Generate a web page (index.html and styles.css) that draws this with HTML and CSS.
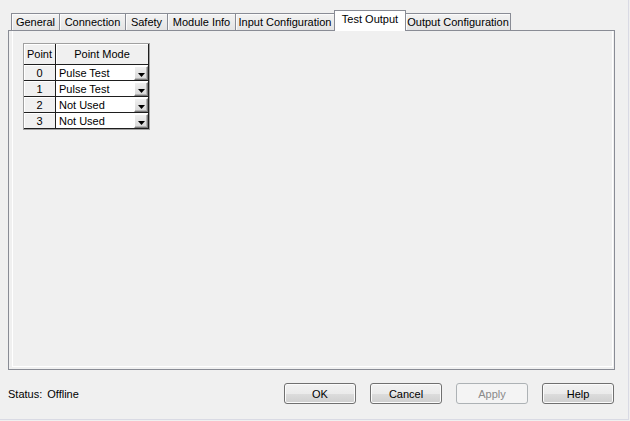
FILE: index.html
```html
<!DOCTYPE html>
<html>
<head>
<meta charset="utf-8">
<link rel="stylesheet" href="styles.css">
</head>
<body>
<div class="window">
  <div class="tabs">
    <div class="tab t-general">General</div>
    <div class="tab t-connection">Connection</div>
    <div class="tab t-safety">Safety</div>
    <div class="tab t-module">Module Info</div>
    <div class="tab t-input">Input Configuration</div>
    <div class="tab active t-test">Test Output</div>
    <div class="tab t-output">Output Configuration</div>
  </div>
  <div class="panel">
    <div class="page">
      <div class="grid">
        <div class="hd">Point</div>
        <div class="hd">Point Mode</div>
        <div class="num">0</div>
        <div class="mode"><span>Pulse Test</span><span class="drop"><svg width="7" height="4" viewBox="0 0 7 4"><polygon points="0,0 7,0 3.5,4" fill="#000"/></svg></span></div>
        <div class="num">1</div>
        <div class="mode"><span>Pulse Test</span><span class="drop"><svg width="7" height="4" viewBox="0 0 7 4"><polygon points="0,0 7,0 3.5,4" fill="#000"/></svg></span></div>
        <div class="num">2</div>
        <div class="mode"><span>Not Used</span><span class="drop"><svg width="7" height="4" viewBox="0 0 7 4"><polygon points="0,0 7,0 3.5,4" fill="#000"/></svg></span></div>
        <div class="num">3</div>
        <div class="mode"><span>Not Used</span><span class="drop"><svg width="7" height="4" viewBox="0 0 7 4"><polygon points="0,0 7,0 3.5,4" fill="#000"/></svg></span></div>
      </div>
    </div>
  </div>
  <div class="footer">
    <div class="status"><span>Status:</span><span>Offline</span></div>
    <div class="btns">
      <button class="btn">OK</button>
      <button class="btn">Cancel</button>
      <button class="btn disabled">Apply</button>
      <button class="btn">Help</button>
    </div>
  </div>
</div>
</body>
</html>
```
FILE: styles.css
```css
html, body {
  margin: 0;
  padding: 0;
  background: #f0f0f0;
}
body {
  font-family: "Liberation Sans", Arial, sans-serif;
  font-size: 11px;
  color: #000;
}
.window {
  box-sizing: border-box;
  width: 629px;
  height: 420px;
  padding: 10px 0 0 8px;
  border-right: 1px solid #d9dae4;
  border-bottom: 1px solid #d9dae4;
  display: flex;
  flex-direction: column;
}
.tabs {
  display: flex;
  align-items: flex-end;
  height: 20px;
  padding-left: 3px;
}
.tab {
  box-sizing: border-box;
  height: 17px;
  line-height: 16px;
  text-align: center;
  white-space: nowrap;
  border-top: 1px solid #898c95;
  border-left: 1px solid #898c95;
  background: linear-gradient(#f3f3f3, #e4e4e4);
  box-shadow: inset 1px 1px 0 #fbfbfb;
}
.t-general { width: 48px; }
.t-connection { width: 66px; }
.t-safety { width: 42px; }
.t-module { width: 68px; }
.t-input { width: 99px; }
.t-test { width: 72px; }
.t-output { width: 105px; border-left: 0; border-right: 1px solid #898c95; }
.tab.active {
  height: 21px;
  margin-bottom: -1px;
  position: relative;
  z-index: 1;
  background: #fff;
  box-shadow: none;
  border-right: 1px solid #898c95;
}
.panel {
  box-sizing: border-box;
  width: 607px;
  height: 340px;
  border: 1px solid #898c95;
  display: flex;
}
.page {
  flex: 1;
  margin: 0 1px 2px 3px;
  border: 1px solid #fff;
  border-top: 0;
  padding: 12px 0 0 10px;
}
.grid {
  display: grid;
  grid-template-columns: 31px 92px;
  grid-template-rows: 20px repeat(4, 15px);
  gap: 1px;
  width: max-content;
  padding: 0 1px 1px 0;
  background: #1e1e1e;
  border: 1px solid #a0a0a0;
}
.hd, .num {
  background: #f0f0f0;
  box-shadow: inset 1px 1px 0 #fff;
  display: flex;
  align-items: center;
  justify-content: center;
}
.num { padding-top: 1px; }
.mode {
  background: #fff;
  display: flex;
  justify-content: space-between;
  align-items: center;
  padding-left: 3px;
}
.drop {
  box-sizing: border-box;
  align-self: flex-start;
  margin-top: 1px;
  width: 14px;
  height: 14px;
  background: linear-gradient(#f0f0f0, #d8d8d8);
  border-top: 1px solid #fff;
  border-left: 1px solid #fff;
  border-right: 1px solid #7a7a7a;
  border-bottom: 1px solid #7a7a7a;
  box-shadow: inset -1px -1px 0 #b4b4b4;
  display: flex;
  justify-content: center;
  align-items: flex-end;
  padding-bottom: 2px;
}
.drop svg { display: block; }
.footer {
  width: 606px;
  padding-top: 13px;
  display: flex;
  align-items: center;
}
.status {
  flex: 1;
  display: flex;
  gap: 5px;
}
.btns {
  display: flex;
  gap: 14px;
}
.btn {
  box-sizing: border-box;
  width: 72px;
  height: 21px;
  padding: 0;
  margin: 0;
  font-family: inherit;
  font-size: 11px;
  color: #000;
  border: 1px solid #707070;
  border-radius: 3px;
  background: linear-gradient(#f2f2f2 0%, #ebebeb 50%, #dddddd 51%, #cfcfcf 100%);
  box-shadow: inset 0 0 0 1px #fbfbfb;
}
.btn.disabled {
  color: #8a8a8a;
  border-color: #adb2b5;
  background: #f4f4f4;
  box-shadow: none;
}
```
